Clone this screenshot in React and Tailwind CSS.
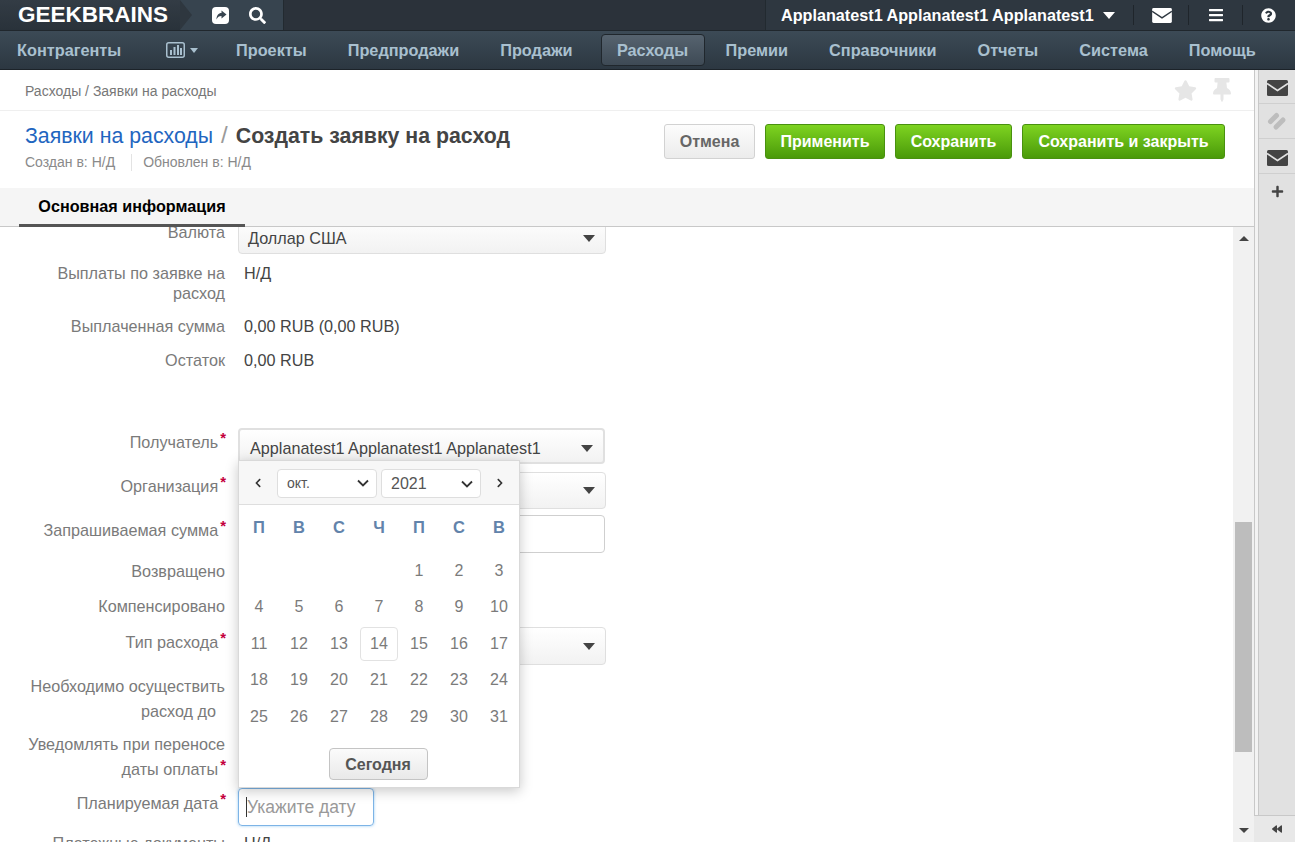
import React from "react";
import {
  FaSearch,
  FaBars,
  FaQuestionCircle,
  FaStar,
  FaThumbtack,
  FaPlus,
  FaBackward,
  FaChevronLeft,
  FaChevronRight,
} from "react-icons/fa";

const navItems = ["Проекты", "Предпродажи", "Продажи"];
const navItemsRight = ["Премии", "Справочники", "Отчеты", "Система", "Помощь"];
const weekDays = ["П", "В", "С", "Ч", "П", "С", "В"];
const days = ["", "", "", "", 1, 2, 3, 4, 5, 6, 7, 8, 9, 10, 11, 12, 13, 14, 15, 16, 17, 18, 19, 20, 21, 22, 23, 24, 25, 26, 27, 28, 29, 30, 31];

function Envelope({ fill, line, width = 21, height = 16 }) {
  return (
    <svg width={width} height={height} viewBox="0 0 21 16">
      <rect width="21" height="16" rx="1.5" fill={fill} />
      <path d="M0 3.5l10.5 7 10.5-7" fill="none" stroke={line} strokeWidth="1.6" />
    </svg>
  );
}

function Caret({ className = "" }) {
  return <span className={`inline-block h-0 w-0 border-x-[6px] border-t-[7px] border-x-transparent border-t-[#444] ${className}`} />;
}

//Label column of the form, right aligned at x=225
function Label({ children, required, className = "" }) {
  return (
    <div className={`w-[226px] shrink-0 pr-[1px] text-right text-[#7a7a7a] ${className}`}>
      {children}
      {required && <span className="relative top-[-5px] ml-[2px] mr-[-1px] font-bold text-[15px] leading-none text-[#c4003d]">*</span>}
    </div>
  );
}

function SelectBox({ children, className = "" }) {
  return (
    <div className={`ml-[12px] flex w-[368px] items-center justify-between rounded-[4px] border border-[#dfdfdf] bg-[linear-gradient(#ffffff,#f2f2f2)] pl-[9px] pr-[10px] text-[#444] ${className}`}>
      <span>{children}</span>
      <Caret />
    </div>
  );
}

function Chevron() {
  return (
    <svg width="12" height="8" viewBox="0 0 12 8" fill="none" stroke="#333" strokeWidth="1.8">
      <path d="M1 1.5l5 5 5-5" />
    </svg>
  );
}

function DatePicker() {
  return (
    <div className="absolute left-[238px] top-[233px] w-[282px] border border-[#d9d9d9] bg-white shadow-[0_3px_12px_rgba(0,0,0,0.22)]">
      <div className="flex h-[44px] items-center border-b border-[#dedede] bg-[#f7f7f7] pl-[14px] pt-[1px]">
        <FaChevronLeft className="text-[10px] text-[#333]" />
        <div className="ml-[14px] flex h-[29px] w-[100px] items-center justify-between rounded-[4px] border border-[#dedede] bg-white pl-[9px] pr-[7px] text-[14px] text-[#555]">
          <span>окт.</span>
          <Chevron />
        </div>
        <div className="ml-[4px] flex h-[29px] w-[100px] items-center justify-between rounded-[4px] border border-[#dedede] bg-white pl-[9px] pr-[7px] pt-[1px] text-[16px] text-[#555]">
          <span>2021</span>
          <Chevron />
        </div>
        <FaChevronRight className="ml-[14px] text-[10px] text-[#333]" />
      </div>
      <div className="grid grid-cols-[repeat(7,40px)]">
        {weekDays.map((d, i) => (
          <div key={i} className="flex h-[47.7px] items-center justify-center pb-[3px] text-[16.5px] font-bold text-[#6283ab]">{d}</div>
        ))}
        {days.map((d, i) => (
          <div key={i} className="flex h-[36.5px] items-center justify-center text-[16px] text-[#7b7b7b]">
            {d === 14 ? (
              <span className="flex h-[34px] w-[38px] items-center justify-center rounded-[4px] border border-[#e2e2e2]">{d}</span>
            ) : d}
          </div>
        ))}
      </div>
      <div className="flex h-[52px] justify-center pt-[13px]">
        <div className="mr-[2px] flex h-[32px] w-[99px] items-center justify-center rounded-[4px] border border-[#c4c4c4] bg-[linear-gradient(#fbfbfb,#e9e9e9)] pt-[1px] text-[16px] font-bold text-[#555]">Сегодня</div>
      </div>
    </div>
  );
}

export default function App() {
  return (
    <div className="flex h-[842px] w-[1295px] flex-col overflow-hidden bg-white font-['Liberation_Sans',Arial,sans-serif] text-[16.2px]">
      {/* top bar */}
      <div className="flex h-[31px] shrink-0 items-stretch border-b border-[#20272d] bg-[#2b323a]">
        <div className="relative z-10 flex w-[180px] items-center bg-[linear-gradient(#333c45,#29323a)] pl-[18px] text-[22.5px] font-bold text-white">
          GEEKBRAINS
          <div className="absolute right-[-12px] top-0 h-0 w-0 border-y-[15px] border-l-[12px] border-y-transparent border-l-[#2e373f]" />
        </div>
        <div className="flex w-[104px] items-center gap-[20px] border-r border-[#222a30] bg-[#37444f] pl-[32px] text-white">
          <svg width="17" height="17" viewBox="0 0 17 17">
            <rect width="17" height="17" rx="4" fill="#fff" />
            <path d="M9.5 3.5l5 4-5 4V9C7 9 5.500 10 4.500 12.500 4.500 8.500 6.500 6 9.500 6z" fill="#37444f" />
          </svg>
          <FaSearch className="text-[17px]" />
        </div>
        <div className="flex-1" />
        <div className="flex w-[530px] items-center border-l border-[#222a30] bg-[#2e3740] text-white">
          <span className="ml-[15px] text-[16.2px] font-bold">Applanatest1 Applanatest1 Applanatest1</span>
          <span className="ml-[9px] h-0 w-0 border-x-[6px] border-t-[7px] border-x-transparent border-t-white" />
          <div className="ml-[18px] h-[20px] w-px bg-[#1f252b]" />
          <span className="ml-[18px]"><Envelope fill="#fff" line="#2e3740" width={20} height={15} /></span>
          <div className="ml-[16px] h-[20px] w-px bg-[#1f252b]" />
          <FaBars className="ml-[19px] text-[16px]" />
          <div className="ml-[18px] h-[20px] w-px bg-[#1f252b]" />
          <FaQuestionCircle className="ml-[18px] text-[15px]" />
        </div>
      </div>

      {/* main nav */}
      <div className="flex h-[39px] shrink-0 items-center border-b border-[#1c2329] bg-[linear-gradient(#3c4a56,#2c3741)] text-[16.3px] font-bold text-[#a9c0cf]">
        <span className="ml-[17px] w-[105px] whitespace-nowrap">Контрагенты</span>
        <span className="ml-[44px] flex items-center gap-[5px]">
          <svg width="19" height="16" viewBox="0 0 19 16">
            <rect x="0.750" y="0.750" width="17.500" height="14.500" rx="2" fill="none" stroke="#a9c0cf" strokeWidth="1.500" />
            <rect x="4" y="8" width="2" height="5" fill="#a9c0cf" />
            <rect x="7.500" y="5" width="2" height="8" fill="#a9c0cf" />
            <rect x="11" y="3" width="2" height="10" fill="#a9c0cf" />
            <rect x="14" y="6" width="2" height="7" fill="#a9c0cf" />
          </svg>
          <span className="h-0 w-0 border-x-[4.500px] border-t-[5px] border-x-transparent border-t-[#a9c0cf]" />
        </span>
        {navItems.map((item, i) => (
          <span key={item} className={i === 0 ? "ml-[38px]" : "ml-[41px]"}>{item}</span>
        ))}
        <span className="ml-[28px] flex h-[32px] w-[104px] items-center justify-center rounded-[4px] border border-[#20272d] bg-[linear-gradient(#56636f,#3e4a55)]">Расходы</span>
        {navItemsRight.map((item, i) => (
          <span key={item} className={i === 0 ? "ml-[21px]" : "ml-[41px]"}>{item}</span>
        ))}
      </div>

      <div className="flex min-h-0 flex-1">
        <div className="flex w-[1254px] shrink-0 flex-col">
          {/* breadcrumbs */}
          <div className="flex h-[41px] shrink-0 items-center justify-between border-b border-[#efefef] pl-[25px] pr-[20px] text-[14px] text-[#777]">
            <span className="mt-[3px]">Расходы / Заявки на расходы</span>
            <span className="flex items-center gap-[13px] text-[#e6e6e6]">
              <FaStar className="text-[23px]" />
              <FaThumbtack className="text-[24px]" />
            </span>
          </div>

          {/* title */}
          <div className="flex h-[77px] shrink-0 justify-between pl-[25px] pr-[29px]">
            <div>
              <div className="mt-[6px] flex items-baseline text-[21.3px]">
                <span className="text-[#1f66c0]">Заявки на расходы</span>
                <span className="mx-[8px] text-[24px] text-[#9a9a9a]">/</span>
                <span className="font-bold text-[#444]">Создать заявку на расход</span>
              </div>
              <div className="-mt-[1px] flex items-center text-[14px] text-[#8a8a8a]">
                <span>Создан в: Н/Д</span>
                <div className="ml-[16px] mr-[11px] h-[17px] w-px bg-[#e3e3e3]" />
                <span>Обновлен в: Н/Д</span>
              </div>
            </div>
            <div className="mt-[13px] flex h-[35px] gap-[10px] text-[16px] font-bold">
              <div className="flex w-[91px] items-center justify-center rounded-[3px] border border-[#d2d2d2] bg-[linear-gradient(#fcfcfc,#ececec)] text-[#666]">Отмена</div>
              <div className="flex w-[120px] items-center justify-center rounded-[3px] border border-[#49910f] bg-[linear-gradient(#7ed321,#4a9a09)] text-white">Применить</div>
              <div className="flex w-[117px] items-center justify-center rounded-[3px] border border-[#49910f] bg-[linear-gradient(#7ed321,#4a9a09)] text-white">Сохранить</div>
              <div className="flex w-[203px] items-center justify-center rounded-[3px] border border-[#49910f] bg-[linear-gradient(#7ed321,#4a9a09)] text-white">Сохранить и закрыть</div>
            </div>
          </div>

          {/* tabs */}
          <div className="relative z-10 flex h-[39px] shrink-0 border-b border-[#c8c8c8] bg-[#f5f5f5] pl-[19px]">
            <div className="flex h-[39px] w-[226px] items-center justify-center border-b-[3px] border-[#555] pt-[1px] text-[16.2px] font-bold text-black">Основная информация</div>
          </div>

          {/* form */}
          <div className="relative flex min-h-0 flex-1 overflow-hidden">
            <div className="min-w-0 flex-1">
              <div className="-mt-[11px] flex h-[38px]">
                <Label className="pt-[4px]">Валюта</Label>
                <SelectBox className="pt-[6px]">Доллар США</SelectBox>
              </div>
              <div className="mt-[9px] flex leading-[20px]">
                <Label>Выплаты по заявке на<br />расход</Label>
                <div className="ml-[18px] text-[#444]">Н/Д</div>
              </div>
              <div className="mt-[13px] flex leading-[20px]">
                <Label>Выплаченная сумма</Label>
                <div className="ml-[18px] text-[#444]">0,00 RUB (0,00 RUB)</div>
              </div>
              <div className="mt-[14px] flex leading-[20px]">
                <Label>Остаток</Label>
                <div className="ml-[18px] text-[#444]">0,00 RUB</div>
              </div>
              <div className="mt-[58px] flex h-[36px]">
                <Label required className="pt-[2px]">Получатель</Label>
                <SelectBox className="!w-[367px] border-2 !border-[#e0e0e0] !bg-[#f3f3f3] !pl-[10px] pt-[4px]">Applanatest1 Applanatest1 Applanatest1</SelectBox>
              </div>
              <div className="mt-[8px] flex h-[37px]">
                <Label required className="pt-[2px]">Организация</Label>
                <SelectBox />
              </div>
              <div className="mt-[6px] flex h-[38px]">
                <Label required className="pt-[3px]">Запрашиваемая сумма</Label>
                <div className="ml-[12px] w-[367px] rounded-[4px] border border-[#cfcfcf]" />
              </div>
              <div className="mt-[8px] flex leading-[20px]">
                <Label>Возвращено</Label>
              </div>
              <div className="mt-[15px] flex leading-[20px]">
                <Label>Компенсировано</Label>
              </div>
              <div className="mt-[11px] flex h-[38px]">
                <Label required className="pt-[3px]">Тип расхода</Label>
                <SelectBox />
              </div>
              <div className="mt-[9px] flex leading-[25px]">
                <Label>Необходимо осуществить<br />расход до&nbsp;&nbsp;</Label>
              </div>
              <div className="mt-[8px] flex leading-[25px]">
                <Label required>Уведомлять при переносе<br />даты оплаты</Label>
              </div>
              <div className="mt-[6px] flex h-[38px]">
                <Label required className="pt-[3px]">Планируемая дата</Label>
                <div className="ml-[12px] flex w-[136px] items-center rounded-[4px] border border-[#7db4e6] pl-[7px] text-[17.5px] text-[#999] shadow-[0_0_3px_rgba(82,168,236,0.6)]">
                  <span className="h-[20px] w-px bg-[#333]" />
                  Укажите дату
                </div>
              </div>
              <div className="mt-[7px] flex leading-[20px]">
                <Label>Платежные документы</Label>
                <div className="ml-[18px] text-[#444]">Н/Д</div>
              </div>
            </div>

            <DatePicker />

            {/* scrollbar */}
            <div className="relative flex w-[21px] shrink-0 flex-col items-center justify-between bg-[#f1f1f1] py-[9px]">
              <span className="h-0 w-0 border-x-[5px] border-b-[5px] border-x-transparent border-b-[#444]" />
              <div className="absolute left-[2px] top-[295px] h-[230px] w-[17px] bg-[#bdbdbd]" />
              <span className="h-0 w-0 border-x-[5px] border-t-[5px] border-x-transparent border-t-[#444]" />
            </div>
          </div>
        </div>

        {/* right side strip */}
        <div className="flex w-[41px] shrink-0 flex-col">
          <div className="flex min-h-0 flex-1 border-l border-[#c8c8c8]">
            <div className="w-[3px] shrink-0 bg-[#f3f3f3]" />
            <div className="flex flex-1 flex-col border-l border-[#c8c8c8] bg-[#e1e1e1]">
              <div className="flex h-[34px] items-center justify-center border-b border-[#cfcfcf] pt-[3px]"><Envelope fill="#444" line="#e1e1e1" /></div>
              <div className="flex h-[35px] items-center justify-center border-b border-[#cfcfcf]">
                <svg width="20" height="20" viewBox="0 0 20 20" fill="none" stroke="#bdbdbd" strokeWidth="5" strokeLinecap="round">
                  <path d="M3.500 10.500l6-6" />
                  <path d="M9 16l7-7" />
                </svg>
              </div>
              <div className="flex h-[35px] items-center justify-center border-b border-[#cfcfcf] pt-[4px]"><Envelope fill="#444" line="#e1e1e1" /></div>
              <div className="flex h-[34px] items-center justify-center"><FaPlus className="text-[13px] text-[#444]" /></div>
            </div>
          </div>
          <div className="flex h-[27px] items-center justify-center border-t border-[#c8c8c8] bg-[#e8e8e8] pl-[4px] text-[#444]"><FaBackward className="text-[10px]" /></div>
        </div>
      </div>
    </div>
  );
}
